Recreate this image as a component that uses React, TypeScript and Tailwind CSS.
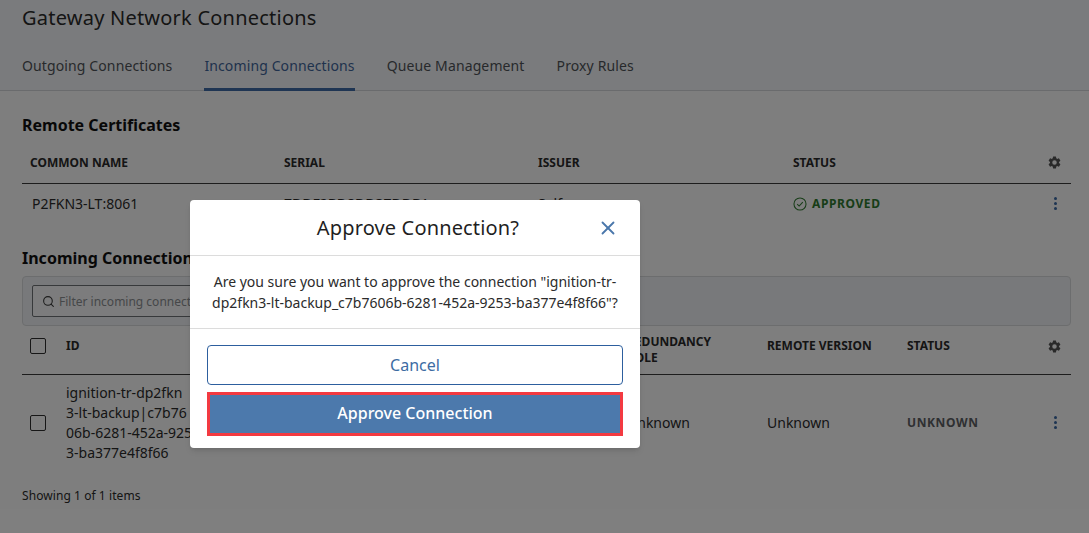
import { Search, X } from 'lucide-react';

const GearIcon = () => (
    <svg viewBox="0 0 24 24" className="ml-[8px] w-[15px] h-[15px] fill-[#555555]">
        <path d="M19.14 12.94c.04-.3.06-.61.06-.94s-.02-.64-.07-.94l2.03-1.58a.5.5 0 0 0 .12-.64l-1.92-3.32a.5.5 0 0 0-.59-.22l-2.39.96a7 7 0 0 0-1.62-.94l-.36-2.54a.48.48 0 0 0-.48-.41h-3.84a.48.48 0 0 0-.47.41l-.36 2.54c-.59.24-1.13.56-1.62.94l-2.39-.96a.49.49 0 0 0-.59.22L2.74 8.84a.48.48 0 0 0 .12.64l2.03 1.58c-.05.3-.09.63-.09.94s.02.64.07.94l-2.03 1.58a.5.5 0 0 0-.12.64l1.92 3.32c.12.22.37.29.59.22l2.39-.96c.5.38 1.03.7 1.62.94l.36 2.54c.05.24.24.41.48.41h3.84c.24 0 .44-.17.47-.41l.36-2.54c.59-.24 1.13-.56 1.62-.94l2.39.96c.22.08.47 0 .59-.22l1.92-3.32a.48.48 0 0 0-.12-.64zM12 15.6a3.6 3.6 0 1 1 0-7.2 3.6 3.6 0 0 1 0 7.2z" />
    </svg>
);

const MoreIcon = () => (
    <div className="flex flex-col items-center gap-[2px]">
        <div className="w-[3px] h-[3px] rounded-full bg-[#3a68a4]" />
        <div className="w-[3px] h-[3px] rounded-full bg-[#3a68a4]" />
        <div className="w-[3px] h-[3px] rounded-full bg-[#3a68a4]" />
    </div>
);

const Checkbox = () => <div className="w-4 h-4 rounded-[2px] border border-[#2e2e2e]" />;

const tabs = ['Outgoing Connections', 'Incoming Connections', 'Queue Management', 'Proxy Rules'];

export default function App() {
    return (
        <div className="relative w-[1089px] h-[533px] overflow-hidden bg-[#fdfdfd] font-['Noto_Sans',sans-serif] text-[#2b2b2b]">
            <div className="bg-[#f5f7fa] border-b border-[#d5d7da] h-[91px]">
                <h1 className="px-[22px] pt-[4px] text-[20px] leading-[28px] tracking-[0.22px] text-[#2b2b2b]">Gateway Network Connections</h1>
                <div className="flex gap-8 px-[22px] mt-[20px]">
                    {tabs.map((tab) => (
                        <div
                            key={tab}
                            className={
                                tab === 'Incoming Connections'
                                    ? 'h-[39px] pt-[4px] text-[14px] leading-[20px] tracking-[0.12px] text-[#3f659a] border-b-[3px] border-[#3f6aa6]'
                                    : 'h-[39px] pt-[4px] text-[14px] leading-[20px] tracking-[0.12px] text-[#4f5358]'
                            }
                        >
                            {tab}
                        </div>
                    ))}
                </div>
            </div>

            <div className="pl-[22px] pr-[18px]">
                <h2 className="mt-[23px] text-[16px] leading-[22px] font-bold text-[#111]">Remote Certificates</h2>
                <div className="mt-[12px] grid grid-cols-[254px_254px_255px_1fr_32px] items-center h-[36px] pb-[6px] pl-2 text-[12px] font-bold border-b border-[#3a3a3a]">
                    <div>COMMON NAME</div>
                    <div>SERIAL</div>
                    <div>ISSUER</div>
                    <div>STATUS</div>
                    <GearIcon />
                </div>
                <div className="grid grid-cols-[254px_254px_255px_1fr_32px] items-center h-[39px] pl-2 text-[14px]">
                    <div className="pl-[2px]">P2FKN3-LT:8061</div>
                    <div>7DDF2BD8DD37DDB1</div>
                    <div>Self</div>
                    <div className="flex items-center gap-[5px] text-[12px] font-bold tracking-[0.6px] text-[#2f7a2f]">
                        <svg viewBox="0 0 16 16" className="w-[14px] h-[14px] fill-none stroke-[#2f7a2f] stroke-[1.2]">
                            <circle cx="8" cy="8" r="6.9" />
                            <path d="M4.8 8.2l2.2 2.2 4.2-4.6" />
                        </svg>
                        APPROVED
                    </div>
                    <MoreIcon />
                </div>

                <h2 className="mt-[24px] text-[16px] leading-[22px] font-bold text-[#111]">Incoming Connections</h2>
                <div className="mt-[7px] h-[50px] flex items-center px-[9px] rounded-[4px] border border-[#d8dadd] bg-[#f1f3f6]">
                    <div className="w-[300px] h-[32px] flex items-center gap-[4px] pl-[9px] rounded-[2px] border border-[#6f7276] bg-[#f8f9fa]">
                        <Search className="w-[13px] h-[13px] text-[#3a3a3a]" strokeWidth={2} />
                        <span className="pt-[1px] text-[12px] text-[#8c8f93]">Filter incoming connections...</span>
                    </div>
                </div>
                <div className="grid grid-cols-[36px_561px_140px_140px_1fr_32px] items-center h-[49px] pb-[9px] pl-2 text-[12px] font-bold border-b border-[#3a3a3a]">
                    <Checkbox />
                    <div>ID</div>
                    <div className="mt-[8px] leading-[16px]">
                        REDUNDANCY
                        <br />
                        ROLE
                    </div>
                    <div>REMOTE VERSION</div>
                    <div>STATUS</div>
                    <GearIcon />
                </div>
                <div className="grid grid-cols-[36px_561px_140px_140px_1fr_32px] items-center h-[97px] pb-[2px] pl-2 text-[14px]">
                    <Checkbox />
                    <div className="leading-[20px] whitespace-nowrap">
                        ignition-tr-dp2fkn
                        <br />
                        3-lt-backup|c7b76
                        <br />
                        06b-6281-452a-925
                        <br />
                        3-ba377e4f8f66
                    </div>
                    <div>Unknown</div>
                    <div>Unknown</div>
                    <div className="text-[12px] font-bold tracking-[0.6px] text-[#5d6064]">UNKNOWN</div>
                    <MoreIcon />
                </div>
                <div className="mt-[16px] text-[12px] leading-[16px] tracking-[0.07px]">Showing 1 of 1 items</div>
            </div>

            {/* backdrop + dialog */}
            <div className="absolute inset-0 bg-black/50 flex items-start">
                <div className="ml-[190px] mt-[200px] w-[450px] h-[248px] rounded-[4px] bg-white shadow-md text-[#2b2b2b]">
                    <div className="relative h-[56px] flex items-center justify-center pl-[6px] border-b border-[#dcdcdc]">
                        <span className="text-[20px] tracking-[0.15px] text-[#1f1f1f]">Approve Connection?</span>
                        <X className="absolute right-[21px] top-[17px] w-[22px] h-[22px] text-[#4a77ab]" strokeWidth={2} />
                    </div>
                    <div className="h-[73px] flex items-center justify-center px-[17px] border-b border-[#dcdcdc] text-center text-[14px] leading-[21px]">
                        Are you sure you want to approve the connection "ignition-tr-dp2fkn3-lt-backup_c7b7606b-6281-452a-9253-ba377e4f8f66"?
                    </div>
                    <div className="flex flex-col gap-[7px] px-[17px] pt-[16px]">
                        <div className="h-[40px] flex items-center justify-center rounded-[4px] border border-[#2d5f9e] text-[16px] text-[#3d6ca3]">Cancel</div>
                        <div className="h-[44px] flex items-center justify-center pb-[2px] bg-[#4c79ac] border-[3px] border-[#f33a41] text-[16px] font-medium text-white">
                            Approve Connection
                        </div>
                    </div>
                </div>
            </div>
        </div>
    );
}
